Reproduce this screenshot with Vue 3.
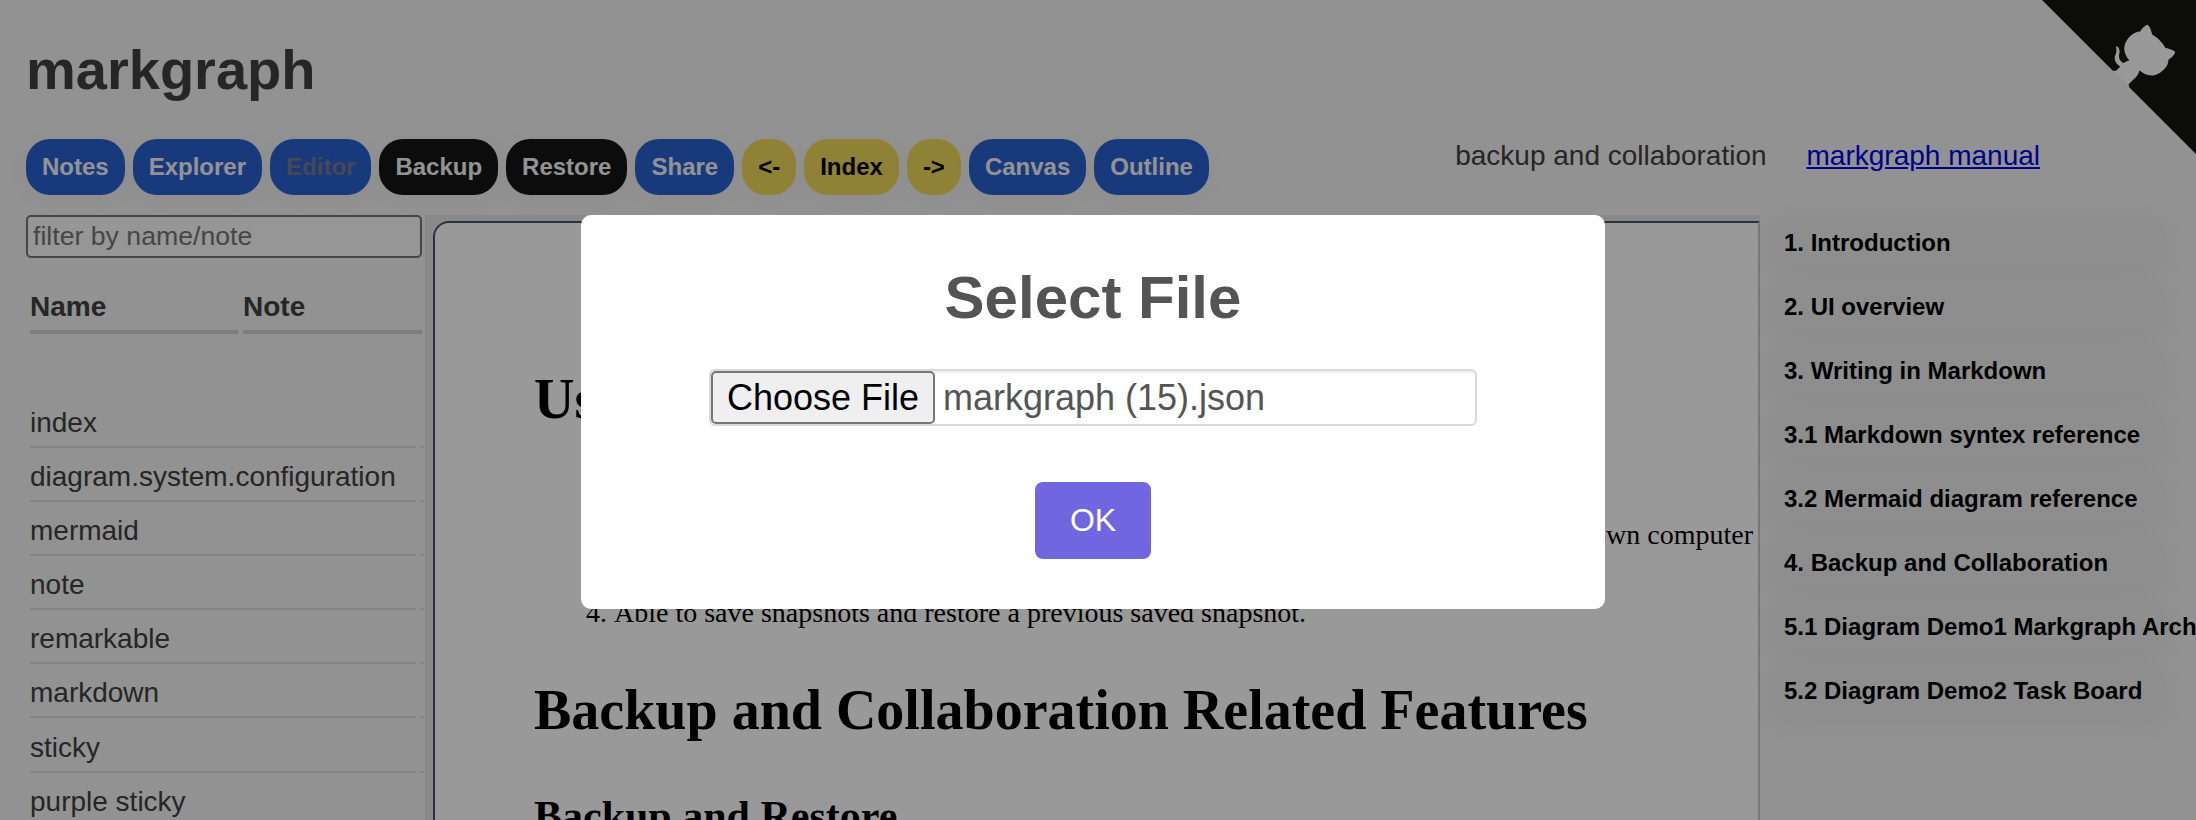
<script setup>
const tools = [
  { label: 'Notes', kind: 'blue' },
  { label: 'Explorer', kind: 'blue' },
  { label: 'Editor', kind: 'blue off' },
  { label: 'Backup', kind: 'black' },
  { label: 'Restore', kind: 'black' },
  { label: 'Share', kind: 'blue' },
  { label: '<-', kind: 'yellow' },
  { label: 'Index', kind: 'yellow' },
  { label: '->', kind: 'yellow' },
  { label: 'Canvas', kind: 'blue' },
  { label: 'Outline', kind: 'blue' },
]
const notes = ['index', 'diagram.system.configuration', 'mermaid', 'note', 'remarkable', 'markdown', 'sticky', 'purple sticky']
const chapters = [
  '1. Introduction',
  '2. UI overview',
  '3. Writing in Markdown',
  '3.1 Markdown syntex reference',
  '3.2 Mermaid diagram reference',
  '4. Backup and Collaboration',
  '5.1 Diagram Demo1 Markgraph Architecture',
  '5.2 Diagram Demo2 Task Board',
]
</script>

<template>
  <div class="page">
    <header class="head">
      <h1 class="brand">markgraph</h1>
      <div class="bar">
        <nav class="tools">
          <button v-for="t in tools" :key="t.label" class="tool" :class="t.kind">{{ t.label }}</button>
        </nav>
        <div class="crumbs">
          <span>backup and collaboration</span>
          <a href="#">markgraph manual</a>
        </div>
      </div>
    </header>

    <main class="body">
      <aside class="left">
        <input class="filter" type="text" placeholder="filter by name/note" />
        <div class="thead">
          <div class="th">Name</div>
          <div class="th">Note</div>
        </div>
        <ul class="rows">
          <li v-for="n in notes" :key="n" class="row">
            <span class="cell">{{ n }}</span>
            <span class="cell"></span>
          </li>
        </ul>
      </aside>
      <div class="splitter"></div>
      <section class="doc">
        <article class="paper">
          <h1 class="h1">Use</h1>
          <ol class="list">
            <li></li>
            <li class="end">own computer</li>
            <li></li>
            <li>Able to save snapshots and restore a previous saved snapshot.</li>
          </ol>
          <h1 class="h1 second">Backup and Collaboration Related Features</h1>
          <h2 class="h2">Backup and Restore</h2>
        </article>
      </section>
      <aside class="right">
        <button v-for="c in chapters" :key="c" class="chapter">{{ c }}</button>
      </aside>
    </main>

    <svg class="corner" viewBox="0 0 250 250" aria-hidden="true">
      <path class="flag" d="M0,0 L115,115 L130,115 L142,142 L250,250 L250,0 Z" />
      <path class="cat" d="M128.3,109.0 C113.8,99.7 119.0,89.6 119.0,89.6 C122.0,82.7 120.5,78.6 120.5,78.6 C119.2,72.0 123.4,76.3 123.4,76.3 C127.3,80.9 125.5,87.3 125.5,87.3 C122.9,97.6 130.6,101.9 134.4,103.2" />
      <path class="cat" d="M115.0,115.0 C114.9,115.1 118.7,116.5 119.8,115.4 L133.7,101.6 C136.9,99.2 139.9,98.4 142.2,98.6 C133.8,88.0 127.5,74.4 143.8,58.0 C148.5,53.4 154.0,51.2 159.7,51.0 C160.3,49.4 163.2,43.6 171.4,40.1 C171.4,40.1 176.1,42.5 178.8,56.2 C183.1,58.6 187.2,61.8 190.9,65.4 C194.5,69.0 197.7,73.2 200.1,77.6 C213.8,80.2 216.3,84.9 216.3,84.9 C212.7,93.1 206.9,96.0 205.4,96.6 C205.1,102.4 203.0,107.8 198.3,112.5 C181.9,128.9 168.3,122.5 157.7,114.1 C157.9,116.9 156.7,120.9 152.7,124.9 L141.0,136.5 C139.8,137.7 141.6,141.9 141.8,141.8 Z" />
    </svg>

    <div class="shade">
      <div class="modal" role="dialog">
        <h2 class="modal-title">Select File</h2>
        <div class="file">
          <button class="choose">Choose File</button>
          <span class="file-name">markgraph (15).json</span>
        </div>
        <button class="ok">OK</button>
      </div>
    </div>
  </div>
</template>

<style>
html,
body {
  margin: 0;
  overflow: hidden;
}
</style>

<style scoped>
.page {
  position: relative;
  width: 2196px;
  height: 820px;
  overflow: hidden;
  box-sizing: border-box;
  display: flex;
  flex-direction: column;
  background: #f3f3f3;
  color: #404040;
  font: 28px/32px "Liberation Sans", Arial, Helvetica, sans-serif;
}
.page * {
  box-sizing: border-box;
}
button {
  font-family: inherit;
  border: 0;
  margin: 0;
}

.head {
  height: 215px;
  flex: none;
  padding: 38px 156px 0 26px;
}
.brand {
  margin: 0;
  height: 101px;
  font-size: 56px;
  line-height: 64px;
}
.bar {
  display: flex;
  justify-content: space-between;
  align-items: flex-start;
}
.tools {
  display: flex;
  gap: 8px;
}
.tool {
  height: 56px;
  padding: 0 16px;
  border-radius: 24px;
  font-size: 24px;
  font-weight: bold;
  line-height: 56px;
  white-space: nowrap;
  box-shadow: 0 4px 24px rgba(0, 0, 0, 0.03);
}
.blue {
  background: #2961d0;
  color: #f5f5f5;
}
.off {
  color: #757b88;
}
.black {
  background: #151515;
  color: #f5f5f5;
}
.yellow {
  background: #eed95c;
  color: #000;
}
.crumbs {
  display: flex;
  gap: 40px;
  padding-top: 1px;
  white-space: nowrap;
}
.crumbs a {
  color: #0000ee;
}

.body {
  flex: 1;
  min-height: 0;
  display: grid;
  grid-template-columns: 425px 8px 1327px 436px;
}
.left {
  padding-left: 26px;
  overflow: hidden;
}
.filter {
  display: block;
  width: 396px;
  height: 43px;
  padding: 0 5px 0;
  border: 2px solid #767676;
  border-radius: 5px;
  background: #fafafa;
  font: 26.67px "Liberation Sans", Arial, sans-serif;
}
.filter::placeholder {
  color: #757575;
}
.thead {
  margin: 32px 0 0 4px;
  display: grid;
  grid-template-columns: 208px 179px;
  column-gap: 5px;
}
.th {
  height: 44px;
  padding-top: 1px;
  font-weight: bold;
  border-bottom: 4px solid #d3d3d3;
}
.rows {
  list-style: none;
  margin: 72px 0 0 4px;
  padding: 0;
}
.row {
  display: grid;
  grid-template-columns: 386px 4px;
  column-gap: 4px;
  height: 54.1px;
}
.cell {
  height: 42px;
  padding-top: 1px;
  white-space: nowrap;
  border-bottom: 2px solid #dcdcdc;
}
.splitter {
  background: #e4e4e4;
  border-left: 1px solid #dcdcdc;
}
.doc {
  background: #e4e4e4;
  padding-top: 6px;
  overflow: hidden;
}
.paper {
  height: 620px;
  padding: 144px 0 0 99px;
  background: #fff;
  border: 2px solid #44546c;
  border-right: 2px solid #c8c8c8;
  border-radius: 16px 0 0 0;
  color: #000;
  font-family: "Liberation Serif", "Times New Roman", serif;
}
.h1 {
  margin: 0;
  font-size: 56px;
  line-height: 64px;
  white-space: nowrap;
}
.list {
  margin: 45px 0 0;
  padding-left: 80px;
  line-height: 39px;
}
.list li {
  height: 39px;
  white-space: nowrap;
}
.end {
  width: 1139px;
  text-align: right;
}
.second {
  margin-top: 46px;
}
.h2 {
  margin: 50px 0 0;
  font-size: 42px;
  line-height: 48px;
}
.right {
  padding: 0 29px 0 8px;
  display: flex;
  flex-direction: column;
  gap: 8px;
}
.chapter {
  flex: none;
  height: 56px;
  padding: 0 16px;
  border-radius: 24px;
  background: #ededed;
  color: #000;
  font-size: 24px;
  font-weight: bold;
  line-height: 56px;
  text-align: left;
  white-space: nowrap;
  box-shadow: 0 6px 28px rgba(0, 0, 0, 0.04);
}

.corner {
  position: absolute;
  top: 0;
  right: 0;
  width: 154px;
  height: 154px;
}
.flag {
  fill: #151513;
}
.cat {
  fill: #fff;
}

.shade {
  position: absolute;
  inset: 0;
  display: flex;
  justify-content: center;
  align-items: flex-start;
  padding: 215px 10px 0 0;
  background: rgba(0, 0, 0, 0.4);
}
.modal {
  width: 1024px;
  height: 394px;
  border-radius: 10px;
  background: #fff;
  display: flex;
  flex-direction: column;
  align-items: center;
  color: #545454;
}
.modal-title {
  margin: 49px 0 0;
  font-size: 60px;
  line-height: 68px;
}
.file {
  margin-top: 37px;
  width: 768px;
  height: 57px;
  display: flex;
  align-items: center;
  border: 2px solid #d9d9d9;
  border-radius: 6px;
  box-shadow: inset 0 2px 2px rgba(0, 0, 0, 0.06);
  font-size: 36px;
}
.choose {
  width: 224px;
  height: 53px;
  padding: 0;
  border: 2px solid #767676;
  border-radius: 5px;
  background: #efefef;
  color: #000;
  font-size: 36px;
  line-height: 49px;
}
.file-name {
  margin-left: 8px;
}
.ok {
  margin-top: 56px;
  width: 116px;
  height: 77px;
  border-radius: 8px;
  background: #7066e0;
  color: #fff;
  font-size: 32px;
}
</style>
